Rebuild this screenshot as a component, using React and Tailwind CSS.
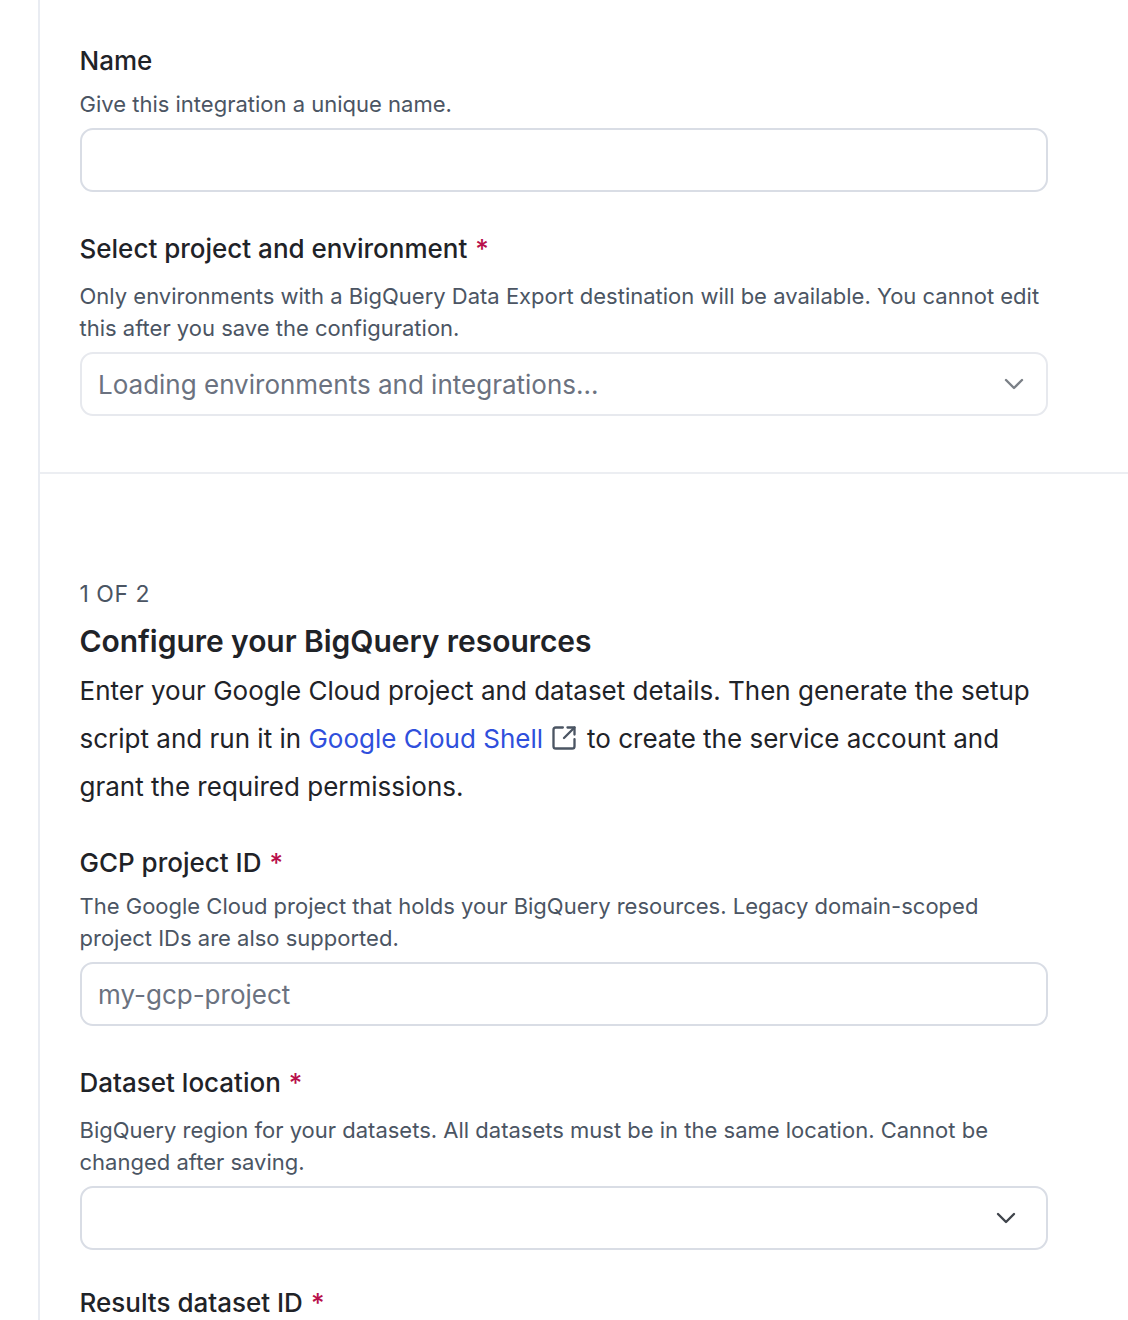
import { ChevronDown, SquareArrowOutUpRight } from 'lucide-react';

function Label({ children, required, className = '' }) {
  return (
    <div className={`-ml-[0.5px] text-[26px] leading-[32px] font-medium text-[#1f2328] ${className}`}>
      {children}
      {required && <span className="ml-[8px] text-[#b80f4b]">*</span>}
    </div>
  );
}

function Help({ children, className = '' }) {
  return <p className={`-ml-[0.5px] text-[22px] leading-[32px] text-[#4b5563] ${className}`}>{children}</p>;
}

function Box({ children, className = '' }) {
  return (
    <div className={`h-[64px] flex items-center justify-between pl-[16px] rounded-[13px] border-2 border-[#d9dde5] text-[26px] ${className}`}>
      {children}
    </div>
  );
}

export default function App() {
  return (
    <div className="h-[1320px] overflow-hidden bg-white font-['Inter',sans-serif]">
      <div className="ml-[38px] h-full border-l-2 border-[#e9ecf2]">
        <section className="h-[474px] border-b-2 border-[#eceef2] pl-[40px] pr-[80px] pt-[45px]">
          <Label>Name</Label>
          <Help className="mt-[11px]">Give this integration a unique name.</Help>
          <Box className="mt-[8px]" />
          <Label required className="mt-[41px]">Select project and environment</Label>
          <Help className="mt-[15px]">
            Only environments with a BigQuery Data Export destination will be available. You cannot edit
            this after you save the configuration.
          </Help>
          <Box className="mt-[8px] border-[#e7e9ee] text-[#6b7280]">
            Loading environments and integrations...
            <ChevronDown size={32} strokeWidth={1.8} className="mr-[16px] text-[#7b8087]" />
          </Box>
        </section>

        <section className="pl-[40px] pr-[80px] pt-[104px]">
          <div className="-ml-[0.5px] text-[23px] leading-[32px] tracking-[0.5px] text-[#4b5563]">1 OF 2</div>
          <h2 className="-ml-[0.5px] mt-[11px] text-[30px] leading-[40px] tracking-[-0.05px] font-semibold text-[#1f2328]">Configure your BigQuery resources</h2>
          <p className="-ml-[0.5px] mt-[6px] text-[26px] leading-[48px] text-[#1f2328]">
            Enter your Google Cloud project and dataset details. Then generate the setup script and run it in{' '}
            <span className="text-[#2f4fdc]">Google Cloud Shell</span>
            <SquareArrowOutUpRight size={28} strokeWidth={2} className="inline-block ml-[7px] mr-[9px] align-[-4px] text-[#4b5563]" />
            to create the service account and grant the required permissions.
          </p>
          <Label required className="mt-[36px]">GCP project ID</Label>
          <Help className="mt-[11px]">
            The Google Cloud project that holds your BigQuery resources. Legacy domain-scoped project IDs are also supported.
          </Help>
          <Box className="mt-[8px] text-[#6b7280]">my-gcp-project</Box>
          <Label required className="mt-[41px]">Dataset location</Label>
          <Help className="mt-[15px]">
            BigQuery region for your datasets. All datasets must be in the same location. Cannot be changed after saving.
          </Help>
          <Box className="mt-[8px]">
            <span />
            <ChevronDown size={32} strokeWidth={1.8} className="mr-[24px] text-[#3f444b]" />
          </Box>
          <Label required className="mt-[37px]">Results dataset ID</Label>
        </section>
      </div>
    </div>
  );
}
